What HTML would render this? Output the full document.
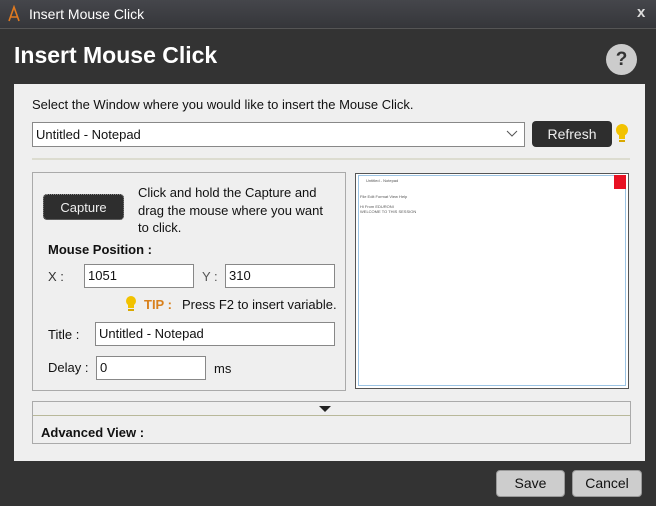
<!DOCTYPE html>
<html><head><style>
*{margin:0;padding:0;box-sizing:border-box}
body{width:656px;height:506px;background:#333;font-family:"Liberation Sans",sans-serif;position:relative;overflow:hidden;font-size:13px;color:#111}
.a{position:absolute}
.tb{left:0;top:0;width:656px;height:29px;background:linear-gradient(#45464b,#35363a);border-bottom:1px solid #555}
input,.inp{position:absolute;background:#fff;border:1px solid #888;font:13px "Liberation Sans",sans-serif;padding-left:3px;line-height:22px;height:24px}
.btn{position:absolute;border-radius:4px;text-align:center}
</style></head><body>
<div class="a tb"></div>
<svg class="a" style="left:6px;top:5px" width="16" height="18"><path d="M3 16 L8 2 L13 16 M5 12 L11 12" stroke="#e07a20" stroke-width="1.6" fill="none"/></svg>
<div class="a" style="left:29px;top:6px;color:#fff;font-size:14px">Insert Mouse Click</div>
<div class="a" style="left:637px;top:4px;color:#ddd;font-size:15px;font-weight:bold">x</div>
<div class="a" style="left:14px;top:42px;color:#fff;font-size:23px;font-weight:bold">Insert Mouse Click</div>
<div class="a" style="left:606px;top:44px;width:31px;height:31px;border-radius:50%;background:#ccc;color:#333;font-weight:bold;font-size:19px;text-align:center;line-height:31px">?</div>
<div class="a" style="left:14px;top:84px;width:631px;height:377px;background:#efefef"></div>
<div class="a" style="left:32px;top:97px">Select the Window where you would like to insert the Mouse Click.</div>
<div class="inp" style="left:32px;top:122px;width:493px;height:25px;line-height:23px">Untitled - Notepad</div>
<svg class="a" style="left:506px;top:129px" width="12" height="10"><path d="M1 2 L6 7 L11 2" stroke="#555" fill="none"/></svg>
<div class="btn" style="left:532px;top:121px;width:80px;height:26px;background:#2e2e2e;color:#eee;line-height:26px;font-size:14px">Refresh</div>
<svg class="a" style="left:614px;top:123px" width="16" height="22"><circle cx="8" cy="7" r="6" fill="#f2c200"/><rect x="5" y="12" width="6" height="4" fill="#f2c200"/><rect x="5" y="17" width="6" height="2" fill="#d9a800"/></svg>
<div class="a" style="left:32px;top:158px;width:598px;height:2px;background:#dcdcd0"></div>
<div class="a" style="left:32px;top:172px;width:314px;height:219px;border:1px solid #aaa"></div>
<div class="btn" style="left:43px;top:194px;width:81px;height:26px;background:#2e2e2e;color:#eee;line-height:26px;font-size:13px;border:1px dotted #888">Capture</div>
<div class="a" style="left:138px;top:184px;line-height:17.5px">Click and hold the Capture and<br>drag the mouse where you want<br>to click.</div>
<div class="a" style="left:48px;top:242px;font-weight:bold">Mouse Position :</div>
<div class="a" style="left:48px;top:269px;color:#333">X :</div>
<div class="inp" style="left:84px;top:264px;width:110px">1051</div>
<div class="a" style="left:202px;top:269px;color:#555">Y :</div>
<div class="inp" style="left:225px;top:264px;width:110px">310</div>
<svg class="a" style="left:124px;top:295px" width="14" height="18"><circle cx="7" cy="6" r="5" fill="#f2c200"/><rect x="4" y="10" width="6" height="3" fill="#f2c200"/><rect x="4" y="14" width="6" height="2" fill="#d9a800"/></svg>
<div class="a" style="left:144px;top:297px;color:#d8801c;font-weight:bold">TIP :</div>
<div class="a" style="left:182px;top:297px">Press F2 to insert variable.</div>
<div class="a" style="left:48px;top:327px">Title :</div>
<div class="inp" style="left:95px;top:322px;width:240px">Untitled - Notepad</div>
<div class="a" style="left:48px;top:360px">Delay :</div>
<div class="inp" style="left:96px;top:356px;width:110px">0</div>
<div class="a" style="left:214px;top:361px">ms</div>
<div class="a" style="left:355px;top:173px;width:274px;height:216px;border:1px solid #555;background:#fff"></div>
<div class="a" style="left:358px;top:175px;width:268px;height:211px;border:1px solid #9cc4e4;background:#fff"></div>
<div class="a" style="left:614px;top:175px;width:12px;height:14px;background:#e81123"></div>
<div class="a" style="left:366px;top:178px;font-size:4px;color:#555">Untitled - Notepad</div>
<div class="a" style="left:360px;top:194px;font-size:4px;color:#555;line-height:5px">File Edit Format View Help<br><br>Hi From EDURONI<br>WELCOME TO THIS SESSION</div>
<div class="a" style="left:32px;top:401px;width:599px;height:43px;border:1px solid #aaa"></div>
<div class="a" style="left:33px;top:415px;width:597px;height:1px;background:#b8b89a"></div>
<svg class="a" style="left:319px;top:406px" width="12" height="7"><path d="M0 0 L12 0 L6 6Z" fill="#222"/></svg>
<div class="a" style="left:41px;top:425px;font-weight:bold">Advanced View :</div>
<div class="btn" style="left:496px;top:470px;width:69px;height:27px;background:#cdcdcd;border:1px solid #999;line-height:25px;font-size:14px">Save</div>
<div class="btn" style="left:572px;top:470px;width:70px;height:27px;background:#cdcdcd;border:1px solid #999;line-height:25px;font-size:14px">Cancel</div>
</body></html>
